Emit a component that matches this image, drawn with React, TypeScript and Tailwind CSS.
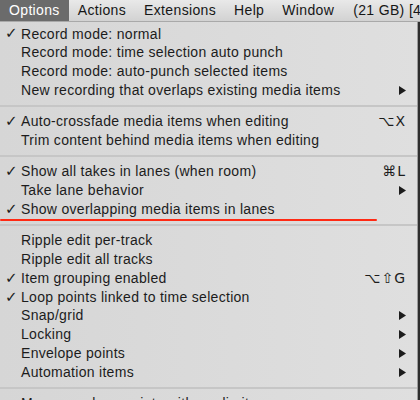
type Item = {
  label: string;
  checked?: boolean;
  shortcut?: string;
  submenu?: boolean;
};

type Entry = Item | "sep";

const entries: Entry[] = [
  { label: "Record mode: normal", checked: true },
  { label: "Record mode: time selection auto punch" },
  { label: "Record mode: auto-punch selected items" },
  { label: "New recording that overlaps existing media items", submenu: true },
  "sep",
  { label: "Auto-crossfade media items when editing", checked: true, shortcut: "⌥X" },
  { label: "Trim content behind media items when editing" },
  "sep",
  { label: "Show all takes in lanes (when room)", checked: true, shortcut: "⌘L" },
  { label: "Take lane behavior", submenu: true },
  { label: "Show overlapping media items in lanes", checked: true },
  "sep",
  { label: "Ripple edit per-track" },
  { label: "Ripple edit all tracks" },
  { label: "Item grouping enabled", checked: true, shortcut: "⌥⇧G" },
  { label: "Loop points linked to time selection", checked: true },
  { label: "Snap/grid", submenu: true },
  { label: "Locking", submenu: true },
  { label: "Envelope points", submenu: true },
  { label: "Automation items", submenu: true },
  "sep",
  { label: "Move envelope points with media items" },
];

const menus = ["Options", "Actions", "Extensions", "Help", "Window"];

function Arrow() {
  return (
    <svg width="7" height="9" viewBox="0 0 7 9" className="block">
      <polygon points="0,0 7,4.5 0,9" fill="#1c1c1c" />
    </svg>
  );
}

function MenuRow({ item }: { item: Item }) {
  return (
    <div className="flex h-[18.8px] shrink-0 items-center pr-[11px] text-[14px] tracking-[0.3px] text-[#1c1c1c]">
      <span className="w-[21px] shrink-0 pl-[5px] font-['DejaVu_Sans'] text-[15px] leading-none">
        {item.checked ? "✓" : ""}
      </span>
      <span className="whitespace-nowrap">{item.label}</span>
      <span className="ml-auto flex items-center">
        {item.shortcut && (
          <span className="font-['DejaVu_Sans'] text-[14px] tracking-[1px]">{item.shortcut}</span>
        )}
        {item.submenu && <Arrow />}
      </span>
    </div>
  );
}

export default function App() {
  return (
    <div className="relative flex h-[400px] w-[420px] flex-col overflow-hidden bg-[#3a3a3a] font-['Liberation_Sans','DejaVu_Sans',sans-serif]">
      <div className="flex h-[22px] shrink-0 items-stretch border-b border-[#a9a9a9] bg-linear-to-b from-[#e9e9e9] to-[#d2d2d2] text-[14px] tracking-[0.35px] text-[#161616]">
        {menus.map((m, i) => (
          <div
            key={m}
            className={`flex items-center px-[9px] ${i === 0 ? "bg-[#6b6b6b] text-white" : ""}`}
          >
            {m}
          </div>
        ))}
        <div className="flex items-center whitespace-nowrap pl-[10px]">(21 GB) [4</div>
      </div>

      <div className="flex min-h-0 flex-1">
        <div className="flex w-[417px] flex-col bg-linear-to-r from-[#d6d6d6] to-[#dfdfdf] pt-[2.6px]">
          {entries.map((e, i) =>
            e === "sep" ? (
              <div key={i} className="flex h-[12.5px] shrink-0 items-center">
                <div className="h-[2px] w-full bg-[#c6c6c6]" />
              </div>
            ) : (
              <MenuRow key={i} item={e} />
            )
          )}
        </div>
        <div className="w-[3px] border-l border-[#9c9c9c] bg-[#2e2e2e]" />
      </div>

      {/* red annotation underline */}
      <div className="absolute left-0 top-[219px] h-[2px] w-[377px] rounded-full bg-[#ff2a14]" />
    </div>
  );
}
